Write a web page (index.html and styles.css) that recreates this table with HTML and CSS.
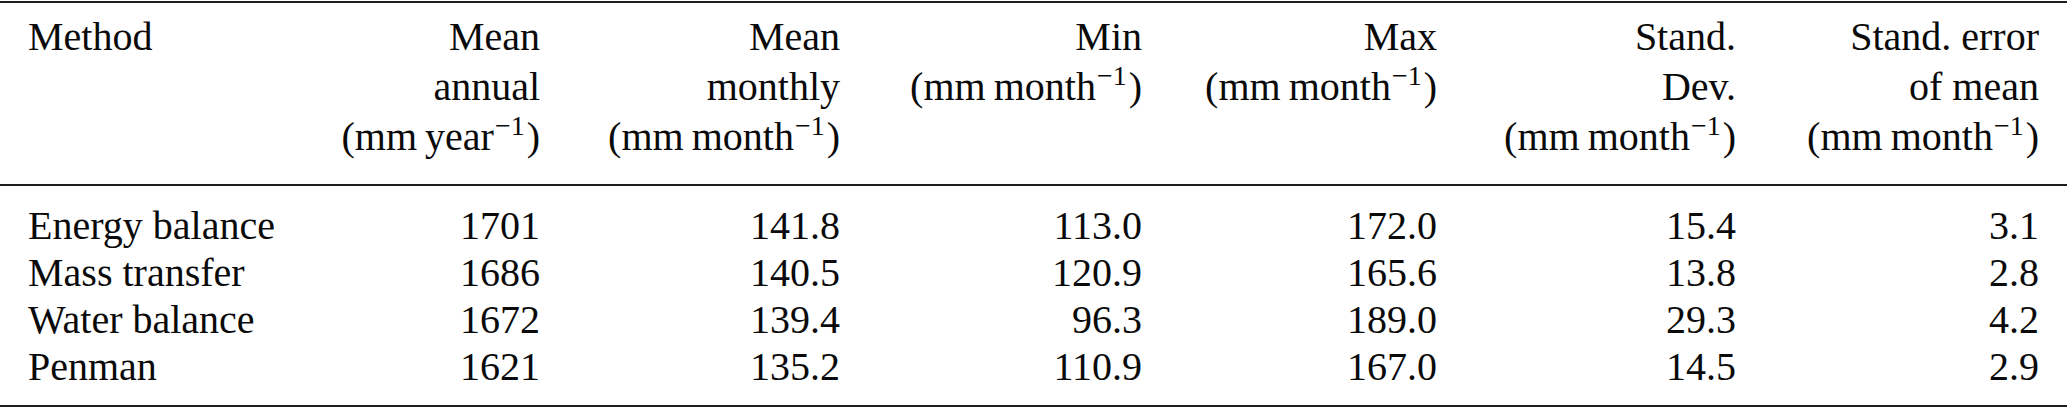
FILE: index.html
```html
<!DOCTYPE html>
<html lang="en">
<head>
<meta charset="utf-8">
<title>Evaporation estimates</title>
<link rel="stylesheet" href="styles.css">
</head>
<body>
<table class="stats">
  <colgroup>
    <col class="c-method">
    <col class="c-annual">
    <col class="c-monthly">
    <col class="c-min">
    <col class="c-max">
    <col class="c-sd">
    <col class="c-se">
  </colgroup>
  <thead>
    <tr>
      <th class="left"><span class="ln">Method</span></th>
      <th><span class="ln">Mean</span><span class="ln">annual</span><span class="ln">(mm&#8201;year<sup>&minus;1</sup>)</span></th>
      <th><span class="ln">Mean</span><span class="ln">monthly</span><span class="ln">(mm&#8201;month<sup>&minus;1</sup>)</span></th>
      <th><span class="ln">Min</span><span class="ln">(mm&#8201;month<sup>&minus;1</sup>)</span></th>
      <th><span class="ln">Max</span><span class="ln">(mm&#8201;month<sup>&minus;1</sup>)</span></th>
      <th><span class="ln">Stand.</span><span class="ln">Dev.</span><span class="ln">(mm&#8201;month<sup>&minus;1</sup>)</span></th>
      <th class="last"><span class="ln">Stand. error</span><span class="ln">of mean</span><span class="ln">(mm&#8201;month<sup>&minus;1</sup>)</span></th>
    </tr>
  </thead>
  <tbody>
    <tr>
      <td class="left">Energy balance</td><td>1701</td><td>141.8</td><td>113.0</td><td>172.0</td><td>15.4</td><td class="last">3.1</td>
    </tr>
    <tr>
      <td class="left">Mass transfer</td><td>1686</td><td>140.5</td><td>120.9</td><td>165.6</td><td>13.8</td><td class="last">2.8</td>
    </tr>
    <tr>
      <td class="left">Water balance</td><td>1672</td><td>139.4</td><td>96.3</td><td>189.0</td><td>29.3</td><td class="last">4.2</td>
    </tr>
    <tr>
      <td class="left">Penman</td><td>1621</td><td>135.2</td><td>110.9</td><td>167.0</td><td>14.5</td><td class="last">2.9</td>
    </tr>
  </tbody>
</table>
</body>
</html>
```

FILE: styles.css
```css
html, body {
  margin: 0;
  padding: 0;
  background: #ffffff;
}

body {
  font-family: "Liberation Serif", Tinos, "Times New Roman", serif;
  font-size: 40px;
  color: #0a0a0a;
}

.stats {
  width: 2067px;
  table-layout: fixed;
  border-collapse: collapse;
  margin-top: 1px;
  border-top: 2px solid #1e1e1e;
  border-bottom: 2px solid #1e1e1e;
}

.c-method { width: 220px; }
.c-annual { width: 320px; }
.c-monthly { width: 300px; }
.c-min { width: 302px; }
.c-max { width: 295px; }
.c-sd { width: 299px; }
.c-se { width: 331px; }

.stats th,
.stats td {
  padding: 0;
  text-align: right;
  vertical-align: top;
  white-space: nowrap;
  font-weight: normal;
  font-family: inherit;
}

.stats .left {
  text-align: left;
  padding-left: 28px;
}

.stats .last {
  padding-right: 28px;
}

.stats thead th {
  line-height: 50px;
  padding-top: 9px;
  padding-bottom: 22px;
  border-bottom: 2px solid #1e1e1e;
}

.ln {
  display: block;
}

.stats sup {
  font-size: 0.7em;
  line-height: 0;
  vertical-align: 0.55em;
  margin-left: 1px;
  margin-right: 2px;
}

.stats tbody td {
  line-height: 47px;
}

.stats tbody tr:first-child td {
  padding-top: 16px;
}

.stats tbody tr:last-child td {
  padding-bottom: 15px;
}
```
